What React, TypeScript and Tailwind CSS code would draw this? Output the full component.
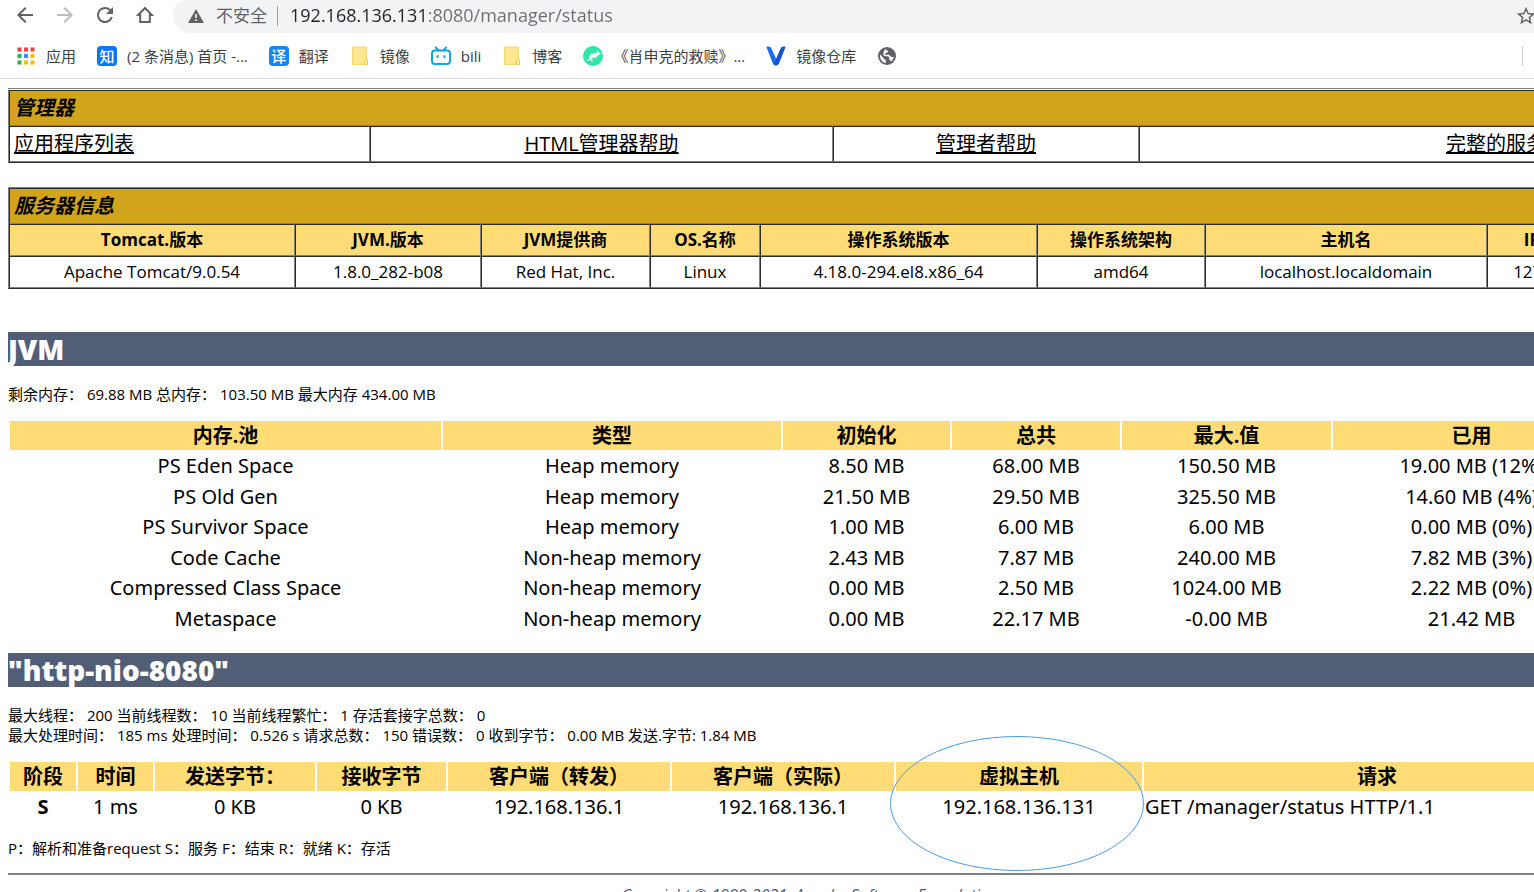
import React from "react";

const serverInfo = [
  { label: "Tomcat.版本", value: "Apache Tomcat/9.0.54", width: "w-[286px]" },
  { label: "JVM.版本", value: "1.8.0_282-b08", width: "w-[186px]" },
  { label: "JVM提供商", value: "Red Hat, Inc.", width: "w-[169px]" },
  { label: "OS.名称", value: "Linux", width: "w-[110px]" },
  { label: "操作系统版本", value: "4.18.0-294.el8.x86_64", width: "w-[277px]" },
  { label: "操作系统架构", value: "amd64", width: "w-[168px]" },
  { label: "主机名", value: "localhost.localdomain", width: "w-[282px]" },
  { label: "IP地址", value: "127.0.0.1", width: "" },
];

const poolColumns = [
  { label: "内存.池", width: "w-[431px]" },
  { label: "类型", width: "w-[338px]" },
  { label: "初始化", width: "w-[167px]" },
  { label: "总共", width: "w-[168px]" },
  { label: "最大.值", width: "w-[209px]" },
  { label: "已用", width: "" },
];

const pools = [
  ["PS Eden Space", "Heap memory", "8.50 MB", "68.00 MB", "150.50 MB", "19.00 MB (12%)"],
  ["PS Old Gen", "Heap memory", "21.50 MB", "29.50 MB", "325.50 MB", "14.60 MB (4%)"],
  ["PS Survivor Space", "Heap memory", "1.00 MB", "6.00 MB", "6.00 MB", "0.00 MB (0%)"],
  ["Code Cache", "Non-heap memory", "2.43 MB", "7.87 MB", "240.00 MB", "7.82 MB (3%)"],
  ["Compressed Class Space", "Non-heap memory", "0.00 MB", "2.50 MB", "1024.00 MB", "2.22 MB (0%)"],
  ["Metaspace", "Non-heap memory", "0.00 MB", "22.17 MB", "-0.00 MB", "21.42 MB"],
];

const outerBorder =
  "w-full table-fixed border-separate border-spacing-0 border border-l-[#808080] border-r-[#2c2c2c] border-b-[#2c2c2c]";
const cellBorder =
  "border border-t-[#2c2c2c] border-l-[#2c2c2c] border-r-[#808080] border-b-[#808080]";

function IconButton({ label, color, children }: { label: string; color: string; children: React.ReactNode }) {
  return (
    <button type="button" aria-label={label} className={color}>
      <svg viewBox="0 0 24 24" className="block size-6" fill="currentColor">
        {children}
      </svg>
    </button>
  );
}

function Bookmark({ label, icon }: { label: string; icon: React.ReactNode }) {
  return (
    <a href="#" aria-label={label || "网页"} className="flex items-center gap-[10px] whitespace-nowrap">
      {icon}
      {label && <span>{label}</span>}
    </a>
  );
}

function AppsIcon() {
  const colors = ["#ea4335", "#ea4335", "#ea4335", "#34a853", "#4285f4", "#fbbc05", "#34a853", "#fbbc05", "#fbbc05"];
  return (
    <svg viewBox="0 0 18 18" className="mx-px size-[18px]">
      {colors.map((c, i) => (
        <rect key={i} x={(i % 3) * 6.5 + 0.5} y={Math.floor(i / 3) * 6.5 + 0.5} width="4" height="4" fill={c} />
      ))}
    </svg>
  );
}

function TextIcon({ text, color }: { text: string; color: string }) {
  return (
    <span className={`flex size-5 items-center justify-center rounded-sm text-[15px] font-medium text-white ${color}`}>
      {text}
    </span>
  );
}

function FolderIcon() {
  return (
    <svg viewBox="0 0 20 20" className="size-5">
      <path d="M2.5 1h14v11.500l1 1.500v4.500h-15z" fill="#ffe693" stroke="#f8d873" strokeWidth="1" />
      <path d="M14.500 18.500v-4l1.500-2 1.500 1.500v4.500z" fill="#ffe9a0" stroke="#f5cb51" strokeWidth="1" />
    </svg>
  );
}

function BiliIcon() {
  return (
    <svg viewBox="0 0 20 20" className="size-5" fill="none" stroke="#12a5dc" strokeWidth="2" strokeLinecap="round">
      <rect x="1" y="4.500" width="18" height="13.500" rx="3" />
      <path d="M4.800 1.500l2.700 2.700M15.200 1.500l-2.700 2.700M6.500 10v1.200M13.500 10v1.200" />
    </svg>
  );
}

function KangarooIcon() {
  return (
    <svg viewBox="0 0 20 20" className="size-5">
      <circle cx="10" cy="10" r="10" fill="#2de6a8" />
      <path
        d="M3 14.500C5 14.700 5.700 13.200 6 11.500 6.400 8.700 8.600 7 11 7.200c1.300.1 2-.3 2.700-1l.3-1.700.9 1.100.8-.7.2 1.500c1 .3 1.600.9 2 1.700l-.5.5-2 .2c-.6 1.200-1.300 1.900-2.400 2.300l.3 1.500-.9-.2-.6-1.100-1.600.4-1.700 1.500 1.400 1.500v.6H7.700l-.3-2.100.2-1.200c-.8.500-.9 1.300-1.300 1.900-.7 1.200-2.200 1.300-3.300.6z"
        fill="#fff"
      />
    </svg>
  );
}

function VIcon() {
  return (
    <svg viewBox="0 0 20 20" className="size-5">
      <path d="M.3.800c2-.8 4.200-.3 5 1.500L10 12.500 9.300 19.500c-1.200-.2-1.900-1-2.400-2z" fill="#1a6cf0" />
      <path d="M19.700.800c-2-.8-4.200-.3-5 1.500L8 17.500c.3 1.400 1.300 2.200 2.500 2 1.200-.1 2-.9 2.500-2z" fill="#1453d6" />
    </svg>
  );
}

function GlobeIcon() {
  return (
    <svg viewBox="0 0 20 20" className="size-5">
      <circle cx="10" cy="10" r="9" fill="#5f6368" />
      <path
        d="M3 8.500l3.500 3.600c.3.500.2 1 .7 1.300l1.600.3v3.200C5.500 16.500 3 13.500 3 10zM8.800 3c-.5 1.200.7 1.300 1.400 1.200l1 1.300-1.800 1.700H7.800v1.500h3.800c1.700.3 1.600 2 2.900 2.200h2.300c-.4 1.900-1.300 3.500-2.800 4.500-.2-1-.6-1.400-1.700-1.500v-2.200c-.6-1.400-1.500-1.400-3-1.400-2.300 0-3-.8-3-2.500 0-1.500 1-2.300 1-3.300.3-.7 1-1.200 1.500-1.500z"
        fill="#fff"
      />
    </svg>
  );
}

function BrowserBar() {
  return (
    <header className="border-b border-[#d9dbde] bg-white">
      <div className="flex h-[33px] w-full">
        <div className="flex h-[30px] shrink-0 items-center gap-4 pr-[16px] pl-[13px]">
          <IconButton label="后退" color="text-[#5f6368]">
            <path d="M20 11H7.830l5.590-5.590L12 4l-8 8 8 8 1.410-1.410L7.830 13H20v-2z" />
          </IconButton>
          <IconButton label="前进" color="text-[#babcbe]">
            <path d="M4 11h12.170l-5.590-5.590L12 4l8 8-8 8-1.410-1.410L16.170 13H4v-2z" />
          </IconButton>
          <IconButton label="重新加载" color="text-[#5f6368]">
            <path d="M17.650 6.350A7.960 7.960 0 0 0 12 4a8 8 0 1 0 7.730 10h-2.080A6 6 0 1 1 12 6c1.660 0 3.140.690 4.220 1.780L13 11h7V4l-2.350 2.350z" />
          </IconButton>
          <IconButton label="主页" color="text-[#5f6368]">
            <path d="M12 5L5.200 12H7.200v7h9.600v-7h2z" fill="none" stroke="currentColor" strokeWidth="2" />
          </IconButton>
        </div>
        <div className="flex h-[33px] flex-1 items-center rounded-bl-[18px] rounded-tl-[14px] bg-[#f1f3f4] pb-[2px] pl-[15px]">
          <svg viewBox="0 0 16 14" className="h-[14px] w-4 shrink-0" fill="#5f6368">
            <path fillRule="evenodd" d="M8 0l8 14H0zM7.200 5v4h1.600V5zm0 5.200v1.700h1.600v-1.700z" />
          </svg>
          <label htmlFor="url" className="ml-3 text-[17px] whitespace-nowrap text-[#5f6368]">
            不安全
          </label>
          <span className="ml-[10px] h-5 w-px bg-[#9aa0a6]" />
          <input
            id="url"
            type="text"
            defaultValue="192.168.136.131:8080/manager/status"
            className="ml-3 min-w-0 flex-1 bg-[linear-gradient(90deg,#202124_136px,#6b6f73_136px)] bg-clip-text text-[18px] text-transparent outline-none"
          />
          <button type="button" aria-label="为此标签页添加书签" className="mr-[83px]">
            <svg viewBox="0 0 24 24" className="size-[22px]" fill="#5f6368">
              <path d="M22 9.240l-7.190-.62L12 2 9.190 8.630 2 9.240l5.460 4.730L5.820 21 12 17.270 18.180 21l-1.630-7.030L22 9.240zM12 15.400l-3.760 2.270 1-4.280-3.320-2.880 4.380-.38L12 6.100l1.710 4.040 4.380.38-3.320 2.880 1 4.280L12 15.400z" />
            </svg>
          </button>
        </div>
      </div>
      <div className="flex h-[45px] w-full items-center pt-px pr-[97px] pl-4">
        <nav className="flex items-center gap-[21px] text-[15px] text-[#3c4043]">
          <Bookmark label="应用" icon={<AppsIcon />} />
          <Bookmark label="(2 条消息) 首页 -..." icon={<TextIcon text="知" color="bg-[#0a76ff]" />} />
          <Bookmark label="翻译" icon={<TextIcon text="译" color="bg-[#1487f5]" />} />
          <Bookmark label="镜像" icon={<FolderIcon />} />
          <Bookmark label="bili" icon={<BiliIcon />} />
          <Bookmark label="博客" icon={<FolderIcon />} />
          <Bookmark label="《肖申克的救赎》..." icon={<KangarooIcon />} />
          <Bookmark label="镜像仓库" icon={<VIcon />} />
          <Bookmark label="" icon={<GlobeIcon />} />
        </nav>
        <span className="ml-auto h-5 w-px bg-[#c8cacd]" />
      </div>
    </header>
  );
}

function ManagerTable() {
  return (
    <table className={`${outerBorder} border-t-white text-xl leading-7`}>
      <colgroup>
        <col className="w-[361px]" />
        <col className="w-[463px]" />
        <col className="w-[306px]" />
        <col />
      </colgroup>
      <tbody>
        <tr className="h-9 bg-[#d2a41c]">
          <th colSpan={4} className={`${cellBorder} px-1 text-left font-bold italic`}>
            管理器
          </th>
        </tr>
        <tr className="h-9">
          <td className={`${cellBorder} px-1`}>
            <a href="#" className="underline">应用程序列表</a>
          </td>
          <td className={`${cellBorder} px-1 text-center`}>
            <a href="#" className="underline">HTML管理器帮助</a>
          </td>
          <td className={`${cellBorder} px-1 text-center`}>
            <a href="#" className="underline">管理者帮助</a>
          </td>
          <td className={`${cellBorder} px-1 text-right`}>
            <a href="#" className="underline">完整的服务器状态</a>
          </td>
        </tr>
      </tbody>
    </table>
  );
}

function ServerTable() {
  return (
    <table className={`${outerBorder} mt-6 border-t-[#808080] text-[17px] leading-6`}>
      <colgroup>
        {serverInfo.map((c) => (
          <col key={c.label} className={c.width} />
        ))}
      </colgroup>
      <tbody>
        <tr className="h-9 bg-[#d2a41c]">
          <th colSpan={8} className={`${cellBorder} px-1 text-left text-xl font-bold italic`}>
            服务器信息
          </th>
        </tr>
        <tr className="h-8 bg-[#ffdc75]">
          {serverInfo.map((c) => (
            <th key={c.label} className={`${cellBorder} font-bold whitespace-nowrap`}>
              {c.label}
            </th>
          ))}
        </tr>
        <tr className="h-8">
          {serverInfo.map((c) => (
            <td key={c.label} className={`${cellBorder} text-center whitespace-nowrap`}>
              {c.value}
            </td>
          ))}
        </tr>
      </tbody>
    </table>
  );
}

function SectionTitle({ children }: { children: React.ReactNode }) {
  return <h1 className="h-[34px] bg-[#525d76] text-[28px] leading-[34px] font-extrabold text-white">{children}</h1>;
}

function PoolTable() {
  return (
    <table className="mt-[15px] w-full table-fixed border-separate border-spacing-[2px] font-['Noto_Sans','Noto_Sans_CJK_SC',sans-serif] text-xl leading-7">
      <colgroup>
        {poolColumns.map((c) => (
          <col key={c.label} className={c.width} />
        ))}
      </colgroup>
      <thead>
        <tr className="h-[29px] bg-[#ffdc75]">
          {poolColumns.map((c) => (
            <th key={c.label} className="pt-px font-bold">{c.label}</th>
          ))}
        </tr>
      </thead>
      <tbody>
        {pools.map((row) => (
          <tr key={row[0]} className="odd:h-7 even:h-[29px]">
            {row.map((cell, i) => (
              <td key={i} className="text-center whitespace-nowrap">{cell}</td>
            ))}
          </tr>
        ))}
      </tbody>
    </table>
  );
}

function RequestTable() {
  return (
    <table className="mt-[15px] w-full table-fixed border-separate border-spacing-[2px] font-['Noto_Sans','Noto_Sans_CJK_SC',sans-serif] text-xl leading-7">
      <colgroup>
        <col className="w-[66px]" />
        <col className="w-[75px]" />
        <col className="w-[160px]" />
        <col className="w-[129px]" />
        <col className="w-[222px]" />
        <col className="w-[222px]" />
        <col className="w-[246px]" />
        <col />
      </colgroup>
      <thead>
        <tr className="h-[29px]">
          <th className="bg-[#ffdc75] pt-px">阶段</th>
          <th className="bg-[#ffdc75] pt-px">时间</th>
          <th className="bg-[#ffdc75] pt-px">发送字节：</th>
          <th className="bg-[#ffdc75] pt-px">接收字节</th>
          <th className="bg-[#ffdc75] pt-px">客户端（转发）</th>
          <th className="bg-[#ffdc75] pt-px">客户端（实际）</th>
          <th className="relative bg-[#ffdc75] pt-px">
            虚拟主机
            {/* hand-drawn ring round the virtual host */}
            <svg
              viewBox="0 0 254 135"
              preserveAspectRatio="none"
              className="pointer-events-none absolute -top-[26px] -left-[6px] z-10 h-[135px] w-[254px] max-w-none"
            >
              <ellipse cx="127" cy="67.5" rx="126.500" ry="67" fill="none" stroke="#4a9be6" />
            </svg>
          </th>
          <th className="bg-[#ffdc75] pt-px">请求</th>
        </tr>
      </thead>
      <tbody>
        <tr className="h-7 text-center">
          <td className="font-bold">S</td>
          <td>1 ms</td>
          <td>0 KB</td>
          <td>0 KB</td>
          <td>192.168.136.1</td>
          <td>192.168.136.1</td>
          <td>192.168.136.131</td>
          <td className="pl-px text-left whitespace-nowrap">GET /manager/status HTTP/1.1</td>
        </tr>
      </tbody>
    </table>
  );
}

export default function App() {
  return (
    <div className="h-screen overflow-hidden bg-white font-['Open_Sans','Noto_Sans_CJK_SC',sans-serif] text-black">
      <div className="min-w-[1620px]">
        <BrowserBar />
        <main className="px-2 pt-[9px]">
          <div className="border-t border-[#808080]">
            <ManagerTable />
          </div>
          <ServerTable />

          <div className="mt-[43px]">
            <SectionTitle>JVM</SectionTitle>
          </div>
          <p className="mt-[18px] text-[15px] leading-5">
            剩余内存： 69.88 MB 总内存： 103.50 MB 最大内存 434.00 MB
          </p>
          <PoolTable />

          <div className="mt-[18px]">
            <SectionTitle>"http-nio-8080"</SectionTitle>
          </div>
          <p className="mt-[18px] text-[15px] leading-5">
            最大线程： 200 当前线程数： 10 当前线程繁忙： 1 存活套接字总数： 0<br />
            最大处理时间： 185 ms 处理时间： 0.526 s 请求总数： 150 错误数： 0 收到字节： 0.00 MB 发送.字节: 1.84 MB
          </p>
          <RequestTable />

          <p className="mt-[15px] text-[15px] leading-5">
            P：解析和准备request S：服务 F：结束 R：就绪 K：存活
          </p>
          <hr className="mt-[15px] border-t-2 border-[#808080]" />
          <footer className="mt-2 text-center text-base text-[#525d76] italic">
            Copyright © 1999-2021, Apache Software Foundation
          </footer>
        </main>
      </div>
    </div>
  );
}
